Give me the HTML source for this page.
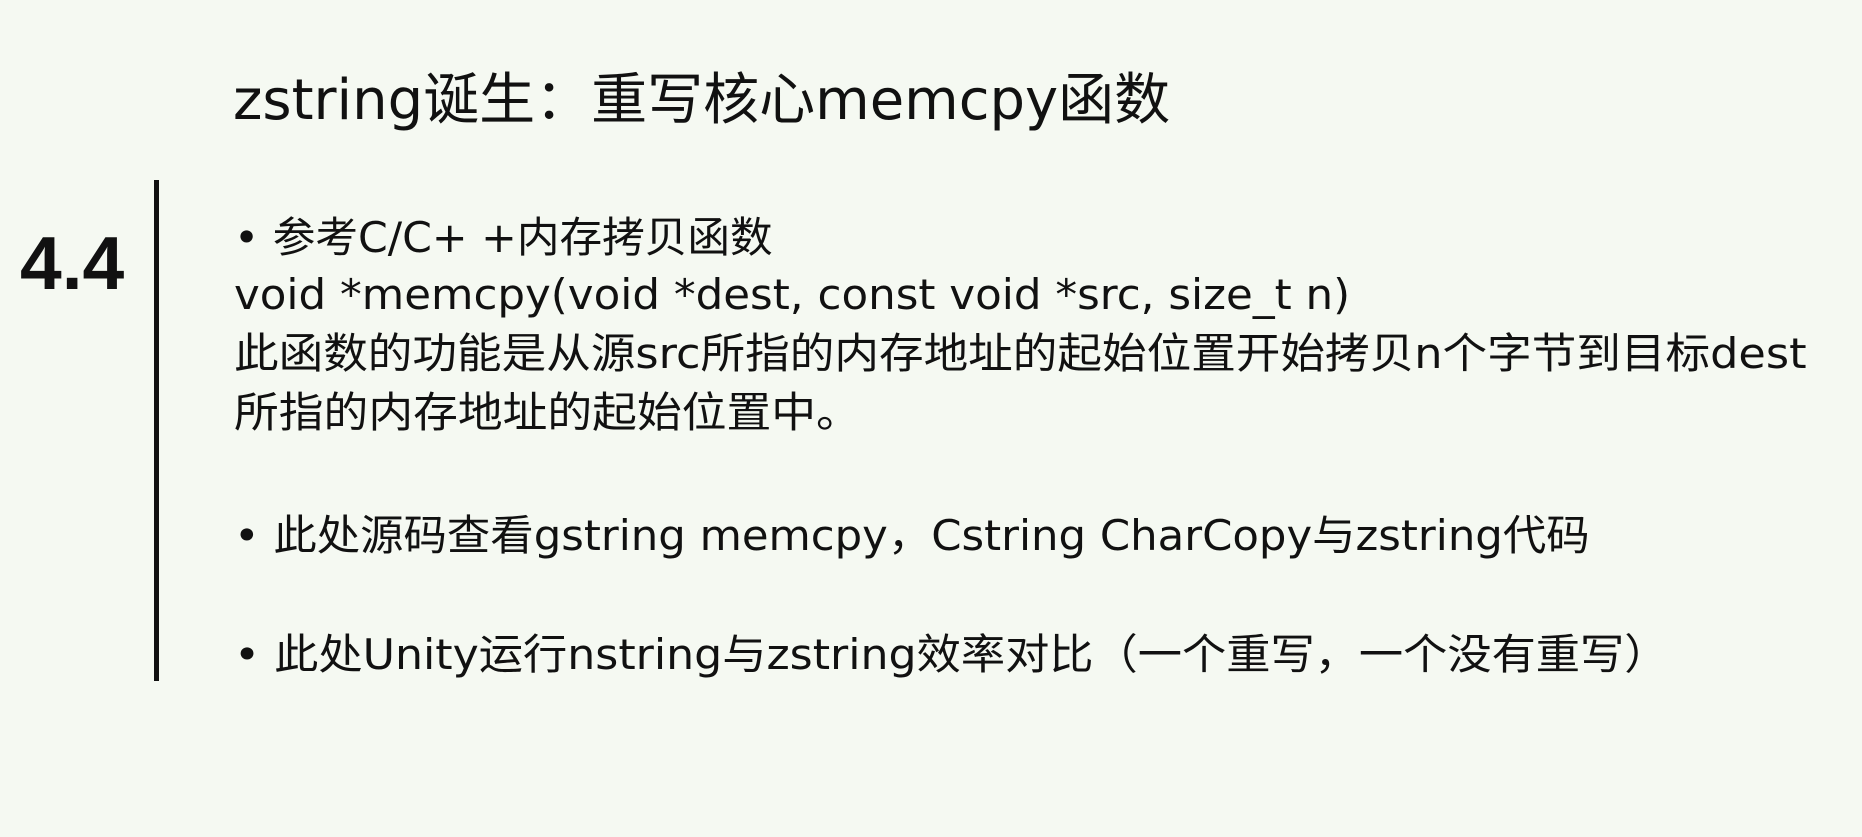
<!DOCTYPE html>
<html><head><meta charset="utf-8"><style>
html,body{margin:0;padding:0}
body{width:1862px;height:837px;background:#f5f9f2;position:relative;overflow:hidden;font-family:"DejaVu Sans","Noto Sans CJK SC",sans-serif;color:#111}
.t{position:absolute;white-space:nowrap;line-height:1;transform-origin:0 50%}
.title{left:233px;top:73px;font-size:56px}
.num{left:20px;top:226px;font-size:75px;font-weight:bold;font-family:"Liberation Sans",sans-serif}
.bar{position:absolute;left:154px;top:180px;width:5px;height:501px;background:#111}
.b{font-size:42px;left:234px}
</style></head><body>
<div class="t title">zstring诞生：重写核心memcpy函数</div>
<div class="t num">4.4</div>
<div class="bar"></div>
<div class="t b" style="top:217px;transform:scaleX(1.015)">• 参考C/C+ +内存拷贝函数</div>
<div class="t b" style="top:274px;transform:scaleX(1.037)">void *memcpy(void *dest, const void *src, size_t n)</div>
<div class="t b" style="top:333px;transform:scaleX(1.062)">此函数的功能是从源src所指的内存地址的起始位置开始拷贝n个字节到目标dest</div>
<div class="t b" style="top:392px;transform:scaleX(1.066)">所指的内存地址的起始位置中。</div>
<div class="t b" style="top:515px;transform:scaleX(1.033)">• 此处源码查看gstring memcpy，Cstring CharCopy与zstring代码</div>
<div class="t b" style="top:634px;transform:scaleX(1.053)">• 此处Unity运行nstring与zstring效率对比（一个重写，一个没有重写）</div>
</body></html>
